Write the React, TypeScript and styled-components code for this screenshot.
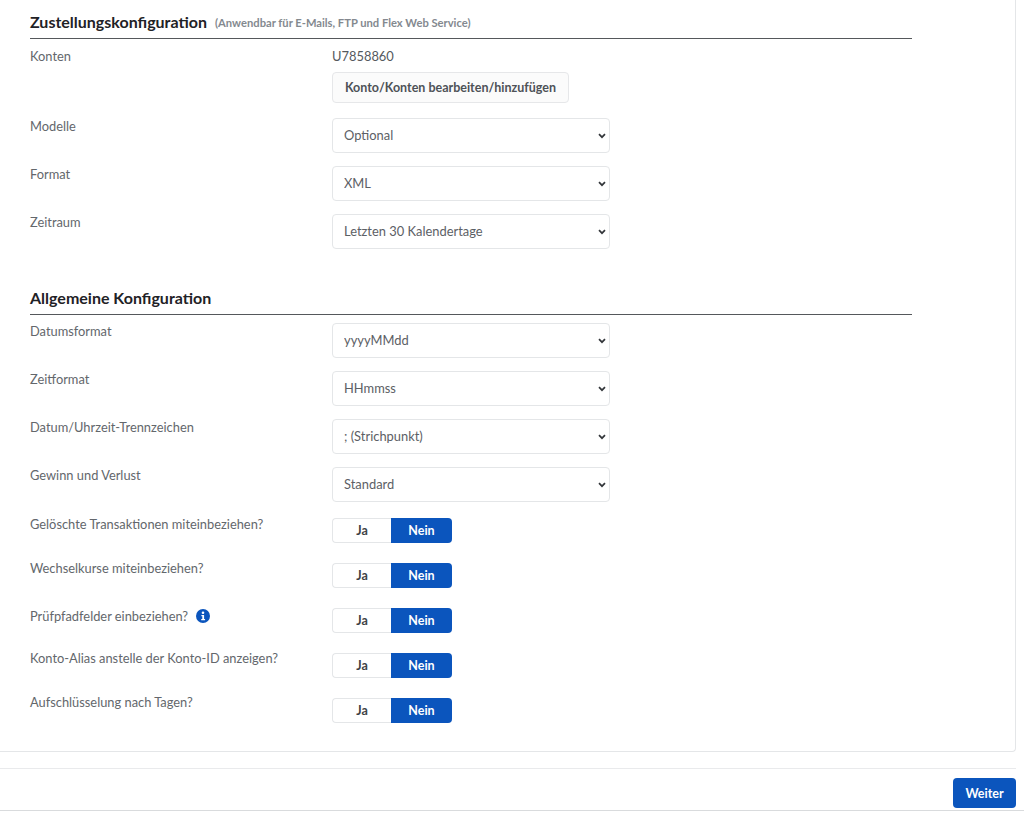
import React from 'react'
import styled, { createGlobalStyle } from 'styled-components'

const GlobalStyle = createGlobalStyle`
  html, body {
    margin: 0;
    padding: 0;
    background: #fff;
  }
  body {
    font-family: Lato, "Open Sans", "Liberation Sans", sans-serif;
    color: #5f6368;
  }
`

const Page = styled.div`
  width: 1024px;
  height: 814px;
  box-sizing: border-box;
  overflow: hidden;
  display: flex;
  flex-direction: column;
`

const Card = styled.div`
  width: 1016px;
  height: 752px;
  box-sizing: border-box;
  padding: 0 103px 0 30px;
  border-right: 1px solid #e4e6e8;
  border-bottom: 1px solid #e4e6e8;
  border-bottom-right-radius: 4px;
  display: flex;
  flex-direction: column;
`

const SectionHeader = styled.div<{ $top: number }>`
  display: flex;
  align-items: flex-start;
  gap: 8px;
  height: 29px;
  margin-top: ${p => p.$top}px;
  border-bottom: 1px solid #55585b;
`

const SectionTitle = styled.h2`
  margin: 0;
  font-size: 16px;
  line-height: 26px;
  font-weight: 700;
  color: #1f2226;
`

const SectionHint = styled.span`
  font-size: 11.2px;
  line-height: 27px;
  font-weight: 700;
  color: #84898f;
`

const Row = styled.div<{ $height: number }>`
  display: grid;
  grid-template-columns: 302px 1fr;
  height: ${p => p.$height}px;
`

const AccountRow = styled(Row)`
  padding-top: 8px;
  box-sizing: border-box;
`

const Gap = styled.div<{ $size: number }>`
  height: ${p => p.$size}px;
`

const Label = styled.div<{ $offset?: number }>`
  display: flex;
  align-items: center;
  align-self: start;
  gap: 8px;
  margin-top: ${p => p.$offset ?? 0}px;
  font-size: 12.85px;
  line-height: 18px;
  color: #63676c;
`

const Value = styled.div`
  font-size: 12.9px;
  line-height: 18px;
  color: #55595e;
`

const SecondaryButton = styled.button`
  display: block;
  width: 237px;
  height: 31px;
  margin-top: 7px;
  padding: 0;
  border: 1px solid #e6e7e9;
  border-radius: 4px;
  background: #fbfbfb;
  font-family: inherit;
  font-size: 12.5px;
  font-weight: 700;
  color: #4e5257;
`

const SelectWrap = styled.div`
  position: relative;
  width: 278px;
  height: 35px;
`

const Select = styled.select`
  display: block;
  width: 100%;
  height: 100%;
  padding: 0 11px;
  padding-bottom: 1px;
  border: 1px solid #e4e6e8;
  border-radius: 4px;
  background: #fff;
  font-family: inherit;
  font-size: 12.9px;
  color: #5c6065;
  outline: none;
  appearance: none;
`

const Chevron = styled.svg`
  position: absolute;
  top: 15px;
  right: 4px;
  width: 8px;
  height: 6px;
  pointer-events: none;
`

const Toggle = styled.div`
  display: flex;
  width: 120px;
  height: 25px;
`

const ToggleOption = styled.div<{ $active?: boolean }>`
  flex: 0 0 ${p => (p.$active ? 61 : 59)}px;
  display: flex;
  align-items: center;
  justify-content: center;
  box-sizing: border-box;
  font-size: 12.5px;
  font-weight: 700;
  color: ${p => (p.$active ? '#fff' : '#3d4145')};
  background: ${p => (p.$active ? '#0b55bd' : '#fff')};
  border: ${p => (p.$active ? '0' : '1px solid #e4e6e8')};
  border-right: 0;
  border-radius: ${p => (p.$active ? '0 4px 4px 0' : '4px 0 0 4px')};
`

const Footer = styled.div`
  margin-top: 16px;
  height: 42px;
  width: 1016px;
  box-sizing: border-box;
  border-top: 1px solid #e9eaec;
  padding-top: 9px;
  display: flex;
  justify-content: flex-end;
`

const PrimaryButton = styled.button`
  width: 63px;
  height: 30px;
  padding: 0;
  border: 0;
  border-radius: 4px;
  background: #0b55bd;
  font-family: inherit;
  font-size: 12.5px;
  font-weight: 700;
  color: #fff;
`

const BottomRule = styled.div`
  height: 1px;
  background: #d9dbdd;
`

const InfoIcon = () => (
  <svg width="14" height="14" viewBox="0 0 14 14" aria-hidden="true">
    <circle cx="7" cy="7" r="7" fill="#0b55bd" />
    <circle cx="7" cy="3.7" r="1.3" fill="#fff" />
    <path d="M5.4 6h2.7v4h1v1.3H5.2V10h1.1V7.3H5.4z" fill="#fff" />
  </svg>
)

const Dropdown = ({ value }: { value: string }) => (
  <SelectWrap>
    <Select defaultValue={value}>
      <option>{value}</option>
    </Select>
    <Chevron viewBox="0 0 8 6" aria-hidden="true">
      <path d="M1 1.2l3 3 3-3" fill="none" stroke="#33363a" strokeWidth="1.7" />
    </Chevron>
  </SelectWrap>
)

const selects = [
  { label: 'Modelle', value: 'Optional', height: 48 },
  { label: 'Format', value: 'XML', height: 48 },
  { label: 'Zeitraum', value: 'Letzten 30 Kalendertage', height: 35 },
]

const generalSelects = [
  { label: 'Datumsformat', value: 'yyyyMMdd' },
  { label: 'Zeitformat', value: 'HHmmss' },
  { label: 'Datum/Uhrzeit-Trennzeichen', value: '; (Strichpunkt)' },
  { label: 'Gewinn und Verlust', value: 'Standard' },
]

const toggles = [
  { label: 'Gelöschte Transaktionen miteinbeziehen?', offset: -3 },
  { label: 'Wechselkurse miteinbeziehen?', offset: -4 },
  { label: 'Prüfpfadfelder einbeziehen?', info: true, offset: -1 },
  { label: 'Konto-Alias anstelle der Konto-ID anzeigen?', offset: -4 },
  { label: 'Aufschlüsselung nach Tagen?', offset: -5 },
]

const App = () => (
  <Page>
    <GlobalStyle />
    <Card>
      <SectionHeader $top={9}>
        <SectionTitle>Zustellungskonfiguration</SectionTitle>
        <SectionHint>(Anwendbar für E-Mails, FTP und Flex Web Service)</SectionHint>
      </SectionHeader>
      <AccountRow $height={79}>
        <Label>Konten</Label>
        <div>
          <Value>U7858860</Value>
          <SecondaryButton>Konto/Konten bearbeiten/hinzufügen</SecondaryButton>
        </div>
      </AccountRow>
      {selects.map(s => (
        <Row key={s.label} $height={s.height}>
          <Label $offset={-1}>{s.label}</Label>
          <Dropdown value={s.value} />
        </Row>
      ))}
      <SectionHeader $top={36}>
        <SectionTitle>Allgemeine Konfiguration</SectionTitle>
      </SectionHeader>
      <Gap $size={8} />
      {generalSelects.map(s => (
        <Row key={s.label} $height={48}>
          <Label $offset={-1}>{s.label}</Label>
          <Dropdown value={s.value} />
        </Row>
      ))}
      <Gap $size={3} />
      {toggles.map(t => (
        <Row key={t.label} $height={45}>
          <Label $offset={t.offset}>
            {t.label}
            {t.info && <InfoIcon />}
          </Label>
          <Toggle>
            <ToggleOption>Ja</ToggleOption>
            <ToggleOption $active>Nein</ToggleOption>
          </Toggle>
        </Row>
      ))}
    </Card>
    <Footer>
      <PrimaryButton>Weiter</PrimaryButton>
    </Footer>
    <BottomRule />
  </Page>
)

export default App
